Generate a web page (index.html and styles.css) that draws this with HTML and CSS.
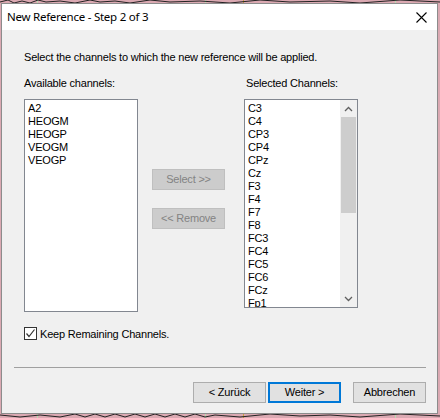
FILE: index.html
```html
<!DOCTYPE html>
<html>
<head>
<meta charset="utf-8">
<link rel="stylesheet" href="styles.css">
</head>
<body>
<div class="desk">
  <svg class="squiggle top" width="440" height="4" viewBox="0 0 440 4"><polyline points="0,2 8,0 14,3 22,1 30,3 38,0 46,2 60,1 75,3 90,0 100,2 115,1 130,3 150,0 170,2 200,1 230,3 260,0 290,2 330,1 360,3 400,0 440,2" fill="none" stroke="#222" stroke-width="1"/></svg>
  <div class="dialog">
    <div class="titlebar">
      <span class="title">New Reference - Step 2 of 3</span>
      <svg class="close" width="11" height="11" viewBox="0 0 11 11"><path d="M0.5 0.5 L10.5 10.5 M10.5 0.5 L0.5 10.5" stroke="#000" stroke-width="1.1"/></svg>
    </div>
    <div class="content">
      <p class="intro">Select the channels to which the new reference will be applied.</p>
      <div class="lists">
        <div class="col">
          <div class="label">Available channels:</div>
          <div class="listbox">
            <div class="item">A2</div>
            <div class="item">HEOGM</div>
            <div class="item">HEOGP</div>
            <div class="item">VEOGM</div>
            <div class="item">VEOGP</div>
          </div>
        </div>
        <div class="mid">
          <div class="btn disabled">Select &gt;&gt;</div>
          <div class="btn disabled">&lt;&lt; Remove</div>
        </div>
        <div class="col">
          <div class="label right">Selected Channels:</div>
          <div class="listbox scroll">
            <div class="items">
              <div class="item">C3</div>
              <div class="item">C4</div>
              <div class="item">CP3</div>
              <div class="item">CP4</div>
              <div class="item">CPz</div>
              <div class="item">Cz</div>
              <div class="item">F3</div>
              <div class="item">F4</div>
              <div class="item">F7</div>
              <div class="item">F8</div>
              <div class="item">FC3</div>
              <div class="item">FC4</div>
              <div class="item">FC5</div>
              <div class="item">FC6</div>
              <div class="item">FCz</div>
              <div class="item">Fp1</div>
            </div>
            <div class="sbar">
              <div class="arrow"><svg width="9" height="6" viewBox="0 0 9 6"><path d="M1 5 L4.5 1.5 L8 5" fill="none" stroke="#606060" stroke-width="1.3"/></svg></div>
              <div class="track"><div class="thumb"></div></div>
              <div class="arrow"><svg width="9" height="6" viewBox="0 0 9 6"><path d="M1 1 L4.5 4.5 L8 1" fill="none" stroke="#606060" stroke-width="1.3"/></svg></div>
            </div>
          </div>
        </div>
      </div>
      <div class="check">
        <span class="box"><svg width="11" height="11" viewBox="0 0 11 11"><path d="M1.5 5.5 L4 8.5 L9.5 1.5" fill="none" stroke="#333" stroke-width="1.2"/></svg></span>
        <span>Keep Remaining Channels.</span>
      </div>
      <div class="sep"></div>
      <div class="footer">
        <div class="btn">&lt; Zurück</div>
        <div class="btn default">Weiter &gt;</div>
        <div class="btn last">Abbrechen</div>
      </div>
    </div>
  </div>
  <svg class="squiggle bottom" width="440" height="4" viewBox="0 0 440 4"><polyline points="0,1 20,3 40,1 60,3 75,0 85,3 95,0 105,3 115,0 125,3 135,0 145,3 155,0 165,3 175,0 185,3 195,0 205,3 215,1 240,3 270,0 300,2 330,1 360,3 400,0 440,2" fill="none" stroke="#222" stroke-width="1"/></svg>
</div>
</body>
</html>
```
FILE: styles.css
```css
html, body {
  margin: 0;
  padding: 0;
}
body {
  width: 440px;
  height: 418px;
  overflow: hidden;
  background-color: #dba9b2;
  background-image:
    linear-gradient(90deg, transparent 37px, #b9dcb0 37px, #b9dcb0 38px, transparent 38px),
    linear-gradient(90deg, transparent 205px, #b9dcb0 205px, #b9dcb0 206px, transparent 206px),
    linear-gradient(90deg, transparent 243px, #c9a040 243px, #c9a040 244px, transparent 244px),
    linear-gradient(90deg, transparent 395px, #b9dcb0 395px, #b9dcb0 396px, transparent 396px);
  font-family: "Liberation Sans", Arial, sans-serif;
  font-size: 11px;
  letter-spacing: -0.2px;
  color: #000;
}
.desk {
  position: relative;
  width: 440px;
  height: 418px;
}
.squiggle {
  position: absolute;
  left: 0;
}
.squiggle.top { top: 0; }
.squiggle.bottom { top: 414px; }
.dialog {
  position: absolute;
  left: 1px;
  top: 3px;
  width: 435px;
  height: 409px;
  border: 1px solid #8c8c8c;
  background: #f0f0f0;
  display: flex;
  flex-direction: column;
}
.titlebar {
  height: 26px;
  background: #fff;
  display: flex;
  align-items: center;
  justify-content: space-between;
  padding: 0 10px 0 5px;
  flex-shrink: 0;
}
.title {
  font-family: "Noto Sans", "Open Sans", sans-serif;
  font-size: 11.5px;
  letter-spacing: -0.25px;
  color: #000;
  margin-top: -1px;
}
.content {
  padding: 0 11px 0 22px;
  display: flex;
  flex-direction: column;
}
.intro {
  margin: 21px 0 0 0;
  line-height: 13px;
}
.lists {
  display: flex;
  margin-top: 13px;
}
.col {
  display: flex;
  flex-direction: column;
}
.label {
  line-height: 13px;
  height: 13px;
  margin-bottom: 9px;
}
.label.right {
  padding-left: 2px;
}
.listbox {
  border: 1px solid #828790;
  background: #fff;
  padding: 2px 0 0 3px;
  width: 109px;
  height: 209px;
  overflow: hidden;
}
.item {
  line-height: 13px;
  height: 13px;
  white-space: nowrap;
}
.listbox.scroll {
  display: flex;
  padding: 0 0 0 3px;
  height: 207px;
}
.listbox.scroll .items {
  flex: 1;
  padding-top: 2px;
  overflow: hidden;
}
.sbar {
  width: 17px;
  background: #f0f0f0;
  display: flex;
  flex-direction: column;
}
.arrow {
  height: 17px;
  display: flex;
  align-items: center;
  justify-content: center;
}
.track {
  flex: 1;
  padding: 0 1px;
}
.thumb {
  height: 96px;
  background: #cdcdcd;
}
.mid {
  width: 73px;
  margin: 0 19px 0 14px;
  display: flex;
  flex-direction: column;
  padding-top: 92px;
  gap: 18px;
}
.btn {
  height: 19px;
  border: 1px solid #adadad;
  background: #e1e1e1;
  display: flex;
  align-items: center;
  justify-content: center;
  width: 71px;
  line-height: 13px;
}
.btn.disabled {
  background: #cccccc;
  border-color: #bfbfbf;
  color: #838383;
}
.check {
  display: flex;
  align-items: center;
  margin-top: 15px;
  height: 13px;
}
.box {
  width: 11px;
  height: 11px;
  border: 1px solid #333;
  background: #fff;
  margin-right: 3px;
  display: flex;
}
.sep {
  height: 1px;
  background: #a0a0a0;
  margin: 27px 0 0 -10px;
}
.footer {
  display: flex;
  justify-content: flex-end;
  margin-top: 14px;
  gap: 2px;
}
.btn.default {
  border: 2px solid #0078d7;
  width: 69px;
  height: 17px;
}
.btn.last {
  margin-left: 10px;
}
```
